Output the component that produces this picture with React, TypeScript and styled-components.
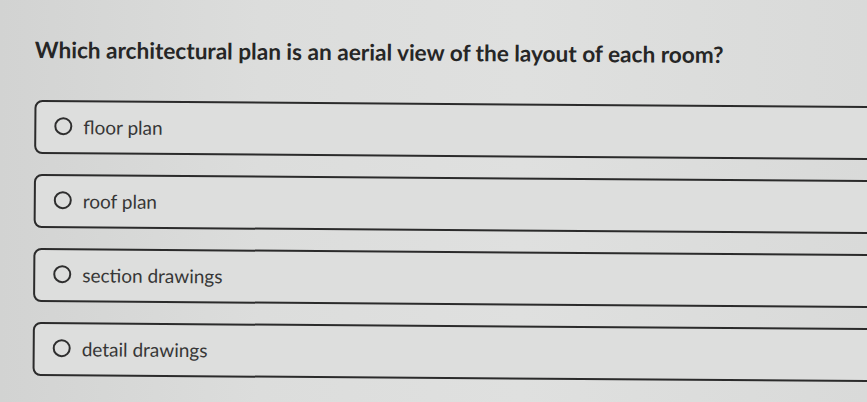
import React from "react";
import styled, { createGlobalStyle } from "styled-components";

const Global = createGlobalStyle`
  html, body {
    margin: 0;
    padding: 0;
    background: #d8d9d8;
    overflow: hidden;
  }
`;

const Page = styled.div`
  width: 867px;
  height: 402px;
  box-sizing: border-box;
  padding: 36px 0 0 35px;
  background: linear-gradient(90deg, #d2d3d2 0%, #dcdddc 30%, #dfe0df 60%, #d9dad9 100%);
  overflow: hidden;
  font-family: Lato, "Liberation Sans", sans-serif;
`;

const Content = styled.div`
  transform: rotate(0.42deg);
  transform-origin: 0 0;
`;

const Question = styled.h1`
  margin: 0;
  font-size: 22.6px;
  line-height: 27px;
  font-weight: 700;
  color: #262626;
`;

const Options = styled.div`
  margin-top: 37px;
  margin-right: -60px;
  display: flex;
  flex-direction: column;
  gap: 20px;
`;

const Option = styled.label`
  display: flex;
  align-items: center;
  gap: 11px;
  height: 54px;
  box-sizing: border-box;
  padding-left: 18px;
  padding-bottom: 2px;
  border: 2px solid #2b2b2b;
  border-radius: 8px;
  background: #dddedd;
  cursor: pointer;
`;

const Radio = styled.span`
  width: 18px;
  height: 18px;
  box-sizing: border-box;
  border: 2.5px solid #2e2e2e;
  border-radius: 50%;
  flex-shrink: 0;
`;

const Label = styled.span`
  font-size: 19px;
  color: #363636;
  font-weight: 400;
`;

const choices = ["floor plan", "roof plan", "section drawings", "detail drawings"];

export default function App() {
  return (
    <Page>
      <Global />
      <Content>
        <Question>Which architectural plan is an aerial view of the layout of each room?</Question>
        <Options>
          {choices.map((c) => (
            <Option key={c}>
              <Radio />
              <Label>{c}</Label>
            </Option>
          ))}
        </Options>
      </Content>
    </Page>
  );
}
